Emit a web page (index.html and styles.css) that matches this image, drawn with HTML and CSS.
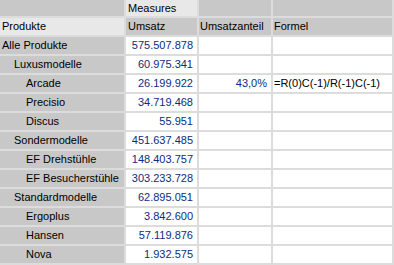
FILE: index.html
```html
<!DOCTYPE html>
<html>
<head>
  <title>Produkte - Umsatz</title>
  <meta charset="UTF-8">
  <link rel="stylesheet" href="styles.css">
</head>
<body>
  <div class="pivot">
    <!-- Kopfzeilen -->
    <div class="head"></div>
    <div class="head light">Measures</div>
    <div class="head"></div>
    <div class="head"></div>

    <div class="head light">Produkte</div>
    <div class="head">Umsatz</div>
    <div class="head col3">Umsatzanteil</div>
    <div class="head col4">Formel</div>

    <!-- Daten -->
    <div class="member">Alle Produkte</div>
    <div class="num">575.507.878</div>
    <div class="cell"></div>
    <div class="cell"></div>

    <div class="member lvl1">Luxusmodelle</div>
    <div class="num">60.975.341</div>
    <div class="cell"></div>
    <div class="cell"></div>

    <div class="member lvl2">Arcade</div>
    <div class="num">26.199.922</div>
    <div class="num">43,0%</div>
    <div class="cell formula">=R(0)C(-1)/R(-1)C(-1)</div>

    <div class="member lvl2">Precisio</div>
    <div class="num">34.719.468</div>
    <div class="cell"></div>
    <div class="cell"></div>

    <div class="member lvl2">Discus</div>
    <div class="num">55.951</div>
    <div class="cell"></div>
    <div class="cell"></div>

    <div class="member lvl1">Sondermodelle</div>
    <div class="num">451.637.485</div>
    <div class="cell"></div>
    <div class="cell"></div>

    <div class="member lvl2">EF Drehstühle</div>
    <div class="num">148.403.757</div>
    <div class="cell"></div>
    <div class="cell"></div>

    <div class="member lvl2">EF Besucherstühle</div>
    <div class="num">303.233.728</div>
    <div class="cell"></div>
    <div class="cell"></div>

    <div class="member lvl1">Standardmodelle</div>
    <div class="num">62.895.051</div>
    <div class="cell"></div>
    <div class="cell"></div>

    <div class="member lvl2">Ergoplus</div>
    <div class="num">3.842.600</div>
    <div class="cell"></div>
    <div class="cell"></div>

    <div class="member lvl2">Hansen</div>
    <div class="num">57.119.876</div>
    <div class="cell"></div>
    <div class="cell"></div>

    <div class="member lvl2">Nova</div>
    <div class="num">1.932.575</div>
    <div class="cell"></div>
    <div class="cell"></div>
  </div>
</body>
</html>
```

FILE: styles.css
```css
body {
  margin: 0;
  background-color: #dcdcdc;
  font-family: "Liberation Sans", Arial, sans-serif;
  font-size: 11px;
  color: #000;
}
.pivot {
  display: grid;
  grid-template-columns: 124px 71px 72px 119px;
  grid-template-rows: 16px;
  grid-auto-rows: 17px;
  gap: 2px;
  padding: 0 2px 2px 0;
  width: 392px;
  background-color: #dcdcdc;
}
.pivot > div {
  line-height: 17px;
  white-space: nowrap;
  overflow: hidden;
}
.head {
  background-color: #c8c8c8;
  padding: 0 2px;
}
.head.light {
  background-color: #e8e8e8;
}
.pivot > .head:nth-child(-n+4) {
  line-height: 16px;
}
.head.col3 {
  padding-left: 1px;
}
.head.col4 {
  padding-left: 1px;
}
.member {
  background-color: #c8c8c8;
  padding-left: 2px;
}
.lvl1 {
  padding-left: 14px;
}
.lvl2 {
  padding-left: 26px;
}
.num {
  background-color: #fff;
  color: #0b2d7d;
  text-align: right;
  padding-right: 4px;
}
.cell {
  background-color: #fff;
}
.formula {
  padding-left: 1px;
}
```
